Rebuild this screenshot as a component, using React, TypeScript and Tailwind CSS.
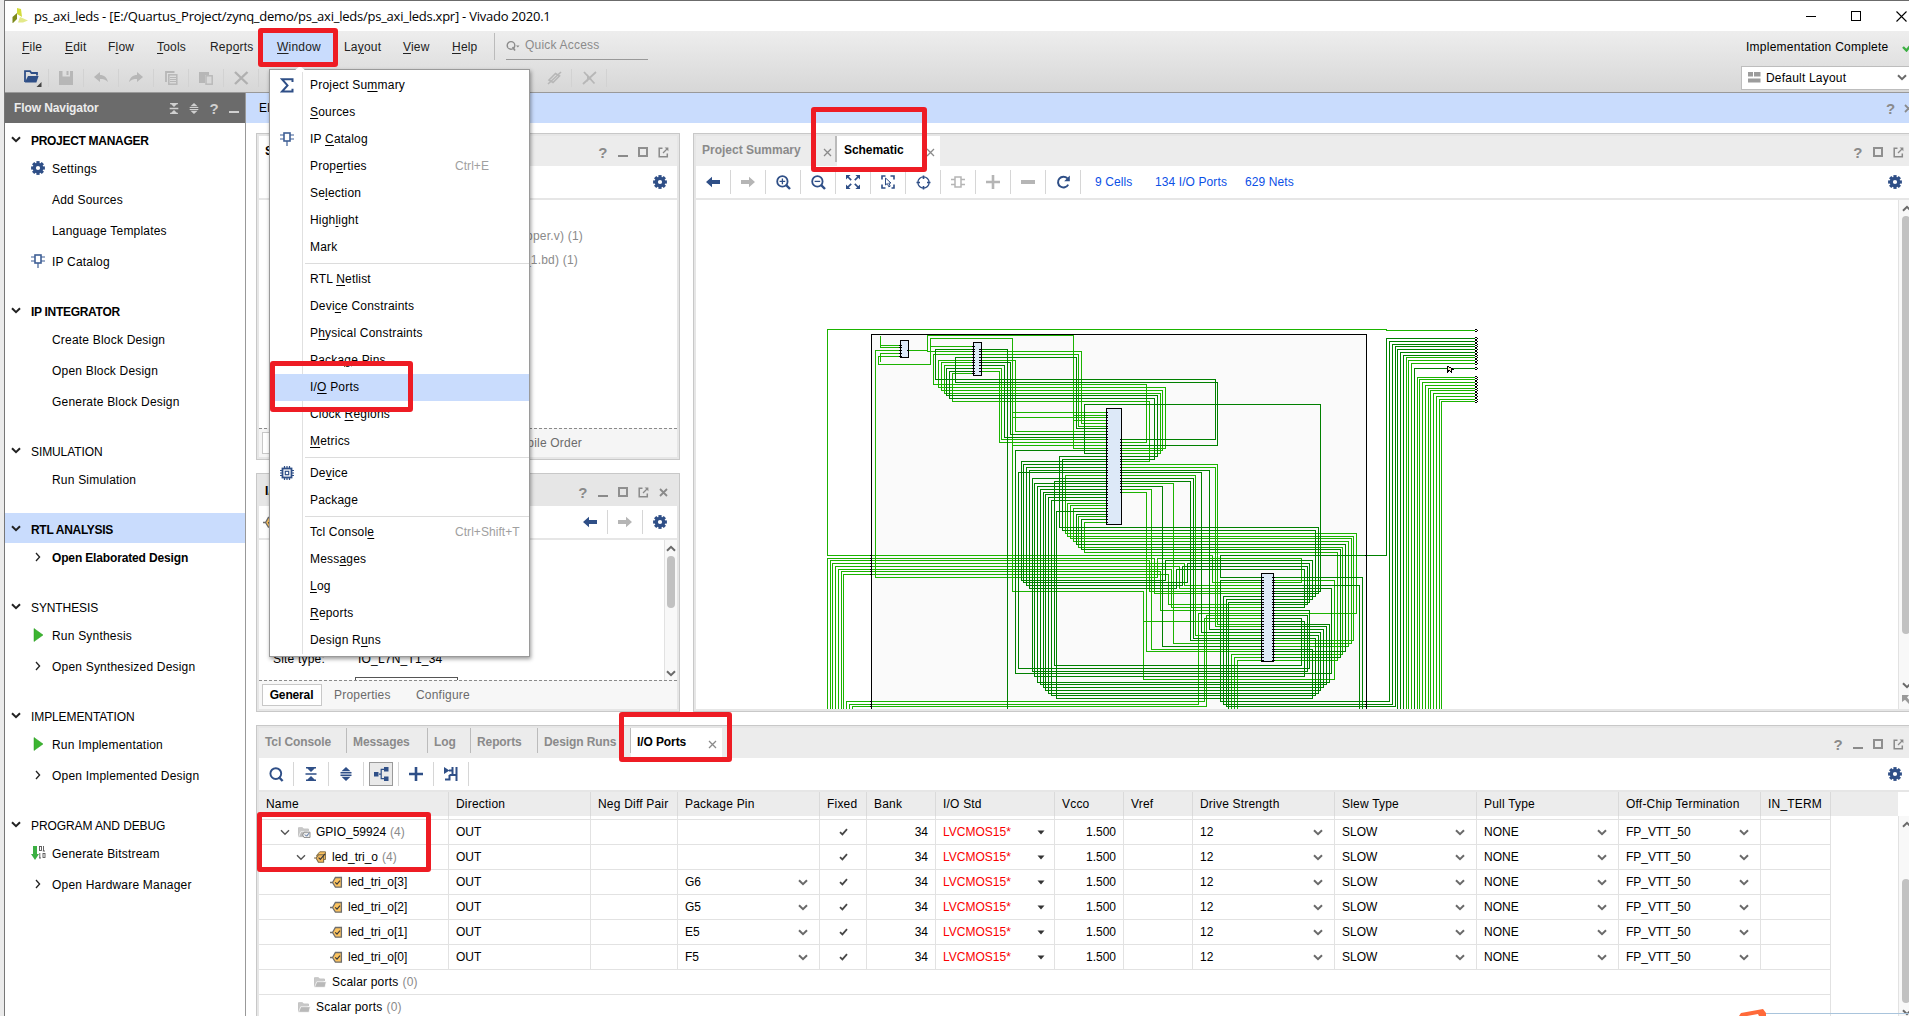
import React from "react";

type IconProps = { className?: string };

const Gear = ({ className = "text-[#2f4f87]" }: IconProps) => (
  <svg width="14" height="14" viewBox="0 0 14 14" className={className}>
    {[0, 45, 90, 135, 180, 225, 270, 315].map((a) => (
      <rect key={a} x="5.4" y="0.1" width="3.2" height="3" fill="currentColor" transform={`rotate(${a} 7 7)`} />
    ))}
    <circle cx="7" cy="7" r="3.7" fill="none" stroke="currentColor" strokeWidth="3.2" />
  </svg>
);

const IpIcon = ({ className = "text-[#3f5f95]" }: IconProps) => (
  <svg width="14" height="14" viewBox="0 0 14 14" className={className} fill="none" stroke="currentColor">
    <rect x="4" y="1" width="6" height="8" strokeWidth="1.6" />
    <path d="M0 3H4M0 7H4M10 3H14M10 7H14M7 9V14" strokeWidth="1.2" />
  </svg>
);

const ChipIcon = () => (
  <svg width="14" height="14" viewBox="0 0 14 14" fill="none" stroke="#2f4f87">
    <rect x="2.5" y="2.5" width="9" height="9" strokeWidth="1.8" />
    <rect x="5.3" y="5.3" width="3.4" height="3.4" strokeWidth="1.2" />
    <path d="M4.5 0V2M7 0V2M9.5 0V2M4.5 12V14M7 12V14M9.5 12V14M0 4.5H2M0 7H2M0 9.5H2M12 4.5H14M12 7H14M12 9.5H14" strokeWidth="1.2" />
  </svg>
);

const SigmaIcon = () => (
  <svg width="14" height="15" viewBox="0 0 14 15" fill="none" stroke="#2f4f87" strokeWidth="2">
    <path d="M12.5 4V1.2H2L7.5 7.4L2 13.5H12.5V10.8" />
  </svg>
);

const Chevron = ({ className = "text-[#6a6a6a]" }: IconProps) => (
  <svg width="10" height="7" viewBox="0 0 10 7" className={className}>
    <path d="M1 1.2L5 5.2L9 1.2" fill="none" stroke="currentColor" strokeWidth="2" />
  </svg>
);
const ThinChevron = ({ className = "text-[#555]" }: IconProps) => (
  <svg width="10" height="7" viewBox="0 0 10 7" className={className}>
    <path d="M1 1.2L5 5.2L9 1.2" fill="none" stroke="currentColor" strokeWidth="1.4" />
  </svg>
);
const ChevronUp = () => (
  <svg width="10" height="7" viewBox="0 0 10 7">
    <path d="M1 5.8L5 1.8L9 5.8" fill="none" stroke="#6a6a6a" strokeWidth="2" />
  </svg>
);
const ChevronRight = () => (
  <svg width="6" height="10" viewBox="0 0 6 10">
    <path d="M1 1L4.6 5L1 9" fill="none" stroke="#222" strokeWidth="1.3" />
  </svg>
);
const Play = () => (
  <svg width="11" height="14" viewBox="0 0 11 14">
    <path d="M1 0.5L10 7L1 13.5Z" fill="#3cb531" stroke="#2a9a20" strokeWidth="0.5" />
  </svg>
);
const Bitstream = () => (
  <svg width="15" height="14" viewBox="0 0 15 14">
    <path d="M2 0H6V8H8L4 14L0 8H2Z" fill="#3cb043" />
    <g fill="none" stroke="#555" strokeWidth="0.9">
      <rect x="8.5" y="0.5" width="2" height="4" />
      <path d="M12.5 0V5M11.8 5H14" />
      <path d="M8.8 7V12M8 12H10" />
      <rect x="12" y="7.5" width="2" height="4" />
    </g>
  </svg>
);

const QMark = ({ className = "text-[#8a8a8a]" }: IconProps) => (
  <span className={`text-[15px] font-bold leading-none ${className}`}>?</span>
);
const MinBar = ({ className = "bg-[#8a8a8a]" }: IconProps) => <span className={`mt-[8px] h-[2px] w-[10px] ${className}`} />;
const Square = () => <span className="h-[10px] w-[10px] border-2 border-[#8f8f8f]" />;
const PopOut = () => (
  <svg width="11" height="11" viewBox="0 0 11 11" fill="none" stroke="#8a8a8a" strokeWidth="1.5">
    <path d="M4.5 1.2H1.2V9.8H9.3V6.5" />
    <path d="M5 6L9.5 1.5" strokeWidth="1.3" />
    <path d="M6.6 0.4H10.4V4.2Z" fill="#8a8a8a" stroke="none" />
  </svg>
);
const Cross = ({ className = "text-[#8a8a8a]", w = 1.3 }: IconProps & { w?: number }) => (
  <svg width="9" height="9" viewBox="0 0 9 9" className={className}>
    <path d="M1 1L8 8M8 1L1 8" stroke="currentColor" strokeWidth={w} />
  </svg>
);

type Ctl = "q" | "min" | "sq" | "pop" | "x";
const Controls = ({ items }: { items: Ctl[] }) => (
  <div className="ml-auto flex h-full items-center pt-[2px]">
    {items.map((c) => (
      <span key={c} className="flex w-[20px] justify-center">
        {c === "q" && <QMark />}
        {c === "min" && <MinBar />}
        {c === "sq" && <Square />}
        {c === "pop" && <PopOut />}
        {c === "x" && <Cross w={1.8} />}
      </span>
    ))}
  </div>
);

const ArrowLeft = ({ className = "text-[#2f4f87]" }: IconProps) => (
  <svg width="14" height="12" viewBox="0 0 14 12" className={className}>
    <path d="M0 6L6 0.8V4H14V8H6V11.2Z" fill="currentColor" />
  </svg>
);
const ArrowRight = () => (
  <svg width="14" height="12" viewBox="0 0 14 12">
    <path d="M14 6L8 0.8V4H0V8H8V11.2Z" fill="#b5b5b5" />
  </svg>
);
const Plus = ({ className = "text-[#2f4f87]" }: IconProps) => (
  <svg width="14" height="14" viewBox="0 0 14 14" className={className}>
    <path d="M7 0V14M0 7H14" stroke="currentColor" strokeWidth="2.6" />
  </svg>
);
const Zoom = ({ plus }: { plus?: boolean }) => (
  <svg width="15" height="15" viewBox="0 0 15 15" fill="none" stroke="#2f4f87">
    <circle cx="6.4" cy="6.4" r="5.2" strokeWidth="1.8" />
    <path d="M10.2 10.2L14 14" strokeWidth="2.4" />
    <path d={plus ? "M6.4 3.6V9.2M3.6 6.4H9.2" : "M3.6 6.4H9.2"} strokeWidth="1.3" />
  </svg>
);
const SearchIcon = () => (
  <svg width="15" height="15" viewBox="0 0 15 15" fill="none" stroke="#2f4f87">
    <circle cx="6.8" cy="6.6" r="5.4" strokeWidth="1.9" />
    <path d="M9.8 10L13.6 14" strokeWidth="2.4" />
  </svg>
);
const FitIcon = () => (
  <svg width="14" height="14" viewBox="0 0 14 14" fill="none" stroke="#2f4f87">
    <path d="M0 0H4.6L0 4.6ZM14 0V4.6L9.4 0ZM14 14H9.4L14 9.4ZM0 14V9.4L4.6 14Z" fill="#2f4f87" stroke="none" />
    <path d="M1 1L5.2 5.2M13 1L8.8 5.2M13 13L8.8 8.8M1 13L5.2 8.8" strokeWidth="1.7" />
  </svg>
);
const SelectIcon = () => (
  <svg width="14" height="14" viewBox="0 0 14 14" fill="none" stroke="#2f4f87">
    <path d="M1 4.5V1H4.5M9.5 1H13V4.5M13 9.5V13H10.5M4.5 13H1V9.5" strokeWidth="1.6" />
    <path d="M4.5 3V10L6.3 8.5L7.8 11.8L9.2 11.2L7.8 8H10Z" strokeWidth="1" />
  </svg>
);
const TargetIcon = () => (
  <svg width="15" height="15" viewBox="0 0 15 15" fill="none" stroke="#2f4f87">
    <circle cx="7.5" cy="7.5" r="5.6" strokeWidth="1.3" />
    <path d="M7.5 0.5V4M7.5 11V14.5M0.5 7.5H4M11 7.5H14.5" strokeWidth="1.6" />
  </svg>
);
const CellIcon = () => (
  <svg width="14" height="14" viewBox="0 0 14 14" fill="none" stroke="#b5b5b5">
    <rect x="4" y="2" width="6" height="10" strokeWidth="1.5" />
    <path d="M0 4.5H4M0 9.5H4M10 4.5H14M10 9.5H14" strokeWidth="1.3" />
  </svg>
);
const Reload = () => (
  <svg width="15" height="14" viewBox="0 0 15 14">
    <path d="M12.2 9.6A5.4 5.4 0 1 1 11.4 3.4" fill="none" stroke="#2f4f87" strokeWidth="2" />
    <path d="M13.8 0.6V6.2H8.2Z" fill="#2f4f87" />
  </svg>
);
const CollapseAll = ({ className = "text-[#2f4f87]" }: IconProps) => (
  <svg width="12" height="14" viewBox="0 0 12 14" className={className} fill="currentColor">
    <path d="M1 0H11V1.6H9.6L6 5L2.4 1.6H1ZM1 14H11V12.4H9.6L6 9L2.4 12.4H1ZM0.5 6.2H11.5V7.8H0.5Z" />
  </svg>
);
const ExpandAll = ({ className = "text-[#2f4f87]" }: IconProps) => (
  <svg width="12" height="14" viewBox="0 0 12 14" className={className} fill="currentColor">
    <path d="M6 0L10.5 4.2H1.5ZM6 14L10.5 9.8H1.5ZM0.5 5H11.5V6.5H0.5ZM0.5 7.5H11.5V9H0.5Z" />
  </svg>
);
const Hier = () => (
  <svg width="15" height="14" viewBox="0 0 15 14">
    <path d="M0 5H4.5V9.5H0ZM10 0H14.5V4.5H10ZM10 9.5H14.5V14H10Z" fill="#2f4f87" />
    <path d="M5 7.2H7.2M10 2.3H7.2V11.7H10" fill="none" stroke="#2f4f87" strokeWidth="1.2" />
  </svg>
);
const MergeIcon = () => (
  <svg width="14" height="14" viewBox="0 0 14 14">
    <path d="M0 0L5.5 3.5L0 7Z" fill="#2f4f87" />
    <path d="M12.5 0V14M8.5 0V8M5 3.5H8.5M5.5 8H12.5M5.5 8V12.5H1" fill="none" stroke="#2f4f87" strokeWidth="2" />
  </svg>
);
const Folder = ({ badge }: { badge?: boolean }) => (
  <svg width="13" height="11" viewBox="0 0 13 11">
    <path d="M0.5 10V0.7H4.5L5.5 2H10.5V4" fill="#c9c9c9" stroke="#c4c4c4" />
    <path d="M0.5 10.3L2.8 4.7H12.3L11 10.3Z" fill="#b9b9b9" stroke="#fff" strokeWidth="0.7" />
    {badge && <path d="M6 5.2H12V10.5H6L4.6 8Z" fill="#eee" stroke="#888" strokeWidth="0.9" />}
    {badge && <path d="M7 7.6L8.6 9.2L11 6.2" fill="none" stroke="#4b6a9c" strokeWidth="1" />}
  </svg>
);
const PortIcon = ({ bus }: { bus?: boolean }) => (
  <svg width="13" height="12" viewBox="0 0 13 12">
    {bus ? (
      <>
        <path d="M2.5 4.5L5.8 0.8H11.5V8.5H5.8Z" fill="#fcc35f" stroke="#8a7650" />
        <path d="M0 7H2L4.4 3.8H9.6V11.3H4.4L2 7" fill="#f3b95c" stroke="#7a6a4a" strokeWidth="1.1" />
        <path d="M4.6 6.6L6.4 8.4L11 2.8" fill="none" stroke="#3b3b3b" strokeWidth="1.2" />
      </>
    ) : (
      <>
        <path d="M0 6.5H2.5L5.4 1.5H11.4V11.2H5.4L2.5 6.5" fill="#fcc35f" stroke="#6d6d6d" strokeWidth="1.3" />
        <path d="M5.2 6.4L7 8.2L10 4.6" fill="none" stroke="#3b3b3b" strokeWidth="1.2" />
      </>
    )}
  </svg>
);
const Tick = () => (
  <svg width="9" height="8" viewBox="0 0 9 8">
    <path d="M1 4.2L3.4 6.4L8 1.2" fill="none" stroke="#484848" strokeWidth="1.8" />
  </svg>
);

/* Text with one underlined mnemonic, marked by a preceding "&". */
const Mn = ({ t }: { t: string }) => {
  const i = t.indexOf("&");
  if (i < 0) return <>{t}</>;
  return (
    <>
      {t.slice(0, i)}
      <span className="underline underline-offset-2">{t[i + 1]}</span>
      {t.slice(i + 2)}
    </>
  );
};

const menus: [string, string][] = [
  ["&File", "w-[43px]"],
  ["&Edit", "w-[43px]"],
  ["F&low", "w-[49px]"],
  ["&Tools", "w-[53px]"],
  ["Rep&orts", "w-[53px]"],
];
const menus2: [string, string][] = [
  ["La&yout", "w-[59px]"],
  ["&View", "w-[49px]"],
  ["&Help", "w-[42px]"],
];

const ToolCell = ({ children }: { children?: React.ReactNode }) => (
  <div className="flex h-[24px] w-[35px] shrink-0 items-center justify-center border-r border-[#d6d6d6]">{children}</div>
);
const MainCell = ({ children }: { children?: React.ReactNode }) => (
  <div className="flex h-[18px] w-[35px] shrink-0 items-center justify-center border-r border-[#d2d2d2]">{children}</div>
);

const TopArea = () => (
  <div className="h-[92px] shrink-0 bg-linear-to-b from-[#ededed] from-35% to-[#d7d7d7]">
    <div className="flex h-[31px] items-center border-t border-[#6b6b6b] bg-white pl-[7px]">
      <svg width="17" height="16" viewBox="0 0 17 16">
        <path d="M5 0L9 1L10 9L5 6Z" fill="#d3dc3c" />
        <path d="M5 5V11L1 15H0.5V9Z" fill="#7d8a1c" />
        <path d="M8 9L16 12.5L11 14.5H6Z" fill="#e3e98a" />
      </svg>
      <span className="ml-[5px] whitespace-nowrap font-['Open_Sans','Noto_Sans',sans-serif] text-[13px] tracking-[-0.24px] text-black">
        ps_axi_leds - [E:/Quartus_Project/zynq_demo/ps_axi_leds/ps_axi_leds.xpr] - Vivado 2020.1
      </span>
      <div className="ml-auto flex items-center gap-[35px] pr-[2px]">
        <span className="h-px w-[10px] bg-black" />
        <span className="h-[10px] w-[10px] border border-black" />
        <svg width="11" height="11" viewBox="0 0 11 11">
          <path d="M0.5 0.5L10.5 10.5M10.5 0.5L0.5 10.5" stroke="#000" strokeWidth="1.1" />
        </svg>
      </div>
    </div>
    <div className="flex h-[31px] items-center text-[#222]">
      <div className="w-[17px]" />
      {menus.map(([t, w]) => (
        <span key={t} className={`${w} whitespace-nowrap`}>
          <Mn t={t} />
        </span>
      ))}
      <div className="flex h-[30px] w-[70px] items-center justify-center bg-[#c9dcfd] pl-[2px]">
        <Mn t="&Window" />
      </div>
      <div className="w-[11px]" />
      {menus2.map(([t, w]) => (
        <span key={t} className={`${w} whitespace-nowrap`}>
          <Mn t={t} />
        </span>
      ))}
      <div className="h-[27px] w-px bg-[#bbb]" />
      <div className="ml-[11px] flex h-[27px] w-[142px] items-center border-b border-[#999] text-[#8b8b8b]">
        <svg width="14" height="12" viewBox="0 0 14 12" fill="none" stroke="#8b8b8b">
          <circle cx="5" cy="5.4" r="3.8" strokeWidth="1.4" />
          <path d="M6.6 7L9 10.5" strokeWidth="1.6" />
          <path d="M10 5.5H13.5L11.8 7.4Z" fill="#8b8b8b" stroke="none" />
        </svg>
        <span className="ml-[5px] pb-[3px]">Quick Access</span>
      </div>
      <span className="ml-auto w-[156px] tracking-[0.25px] text-black">Implementation Complete</span>
      <svg width="7" height="10" viewBox="0 0 7 10">
        <path d="M1 5L4.5 8.5L9 3" fill="none" stroke="#3cb043" strokeWidth="2.4" />
      </svg>
    </div>
    <div className="flex h-[30px] items-center pt-px">
      <div className="w-[9px]" />
      <MainCell>
        <svg width="18" height="17" viewBox="0 0 18 17" className="ml-[4px] mt-[2px]">
          <path d="M1 12V1.2H6L7.5 3H13V5.5" fill="none" stroke="#2f4f87" strokeWidth="1.8" />
          <path d="M0.8 12.6L4 6H14.6L12.4 12.6Z" fill="#2f4f87" />
          <path d="M17.5 12V17H12.5Z" fill="#444" />
        </svg>
      </MainCell>
      <MainCell>
        <svg width="14" height="14" viewBox="0 0 14 14">
          <path d="M0 0H14V14H0ZM3.5 0V5.5H11V0Z" fill="#b7b7b7" fillRule="evenodd" />
          <path d="M7.5 0H9.5V4H7.5Z" fill="#b7b7b7" />
        </svg>
      </MainCell>
      <MainCell>
        <svg width="14" height="11" viewBox="0 0 14 11">
          <path d="M0 5L6 0V3C10 3 13 5.5 14 10C11.5 7.3 9 7 6 7V10Z" fill="#b7b7b7" />
        </svg>
      </MainCell>
      <MainCell>
        <svg width="14" height="11" viewBox="0 0 14 11">
          <path d="M14 5L8 0V3C4 3 1 5.5 0 10C2.5 7.3 5 7 8 7V10Z" fill="#b7b7b7" />
        </svg>
      </MainCell>
      <MainCell>
        <svg width="13" height="14" viewBox="0 0 13 14" fill="none" stroke="#b7b7b7">
          <path d="M1 11V1H9.5" strokeWidth="1.8" />
          <rect x="3.8" y="3.8" width="8" height="9.4" strokeWidth="1.5" />
          <path d="M5 6.5H11M5 8.5H11M5 10.5H11" />
        </svg>
      </MainCell>
      <MainCell>
        <svg width="14" height="14" viewBox="0 0 14 14">
          <path d="M0 1H10V4H6V12H0Z" fill="#b7b7b7" />
          <rect x="7" y="4.8" width="6.2" height="8.4" fill="#d9d9d9" stroke="#b7b7b7" strokeWidth="1.4" />
        </svg>
      </MainCell>
      <MainCell>
        <svg width="15" height="14" viewBox="0 0 15 14">
          <path d="M1 1L13.5 13M13.5 1L1 13" stroke="#b0b0b0" strokeWidth="2.4" />
        </svg>
      </MainCell>
      <div className="w-[278px]" />
      <MainCell>
        <svg width="15" height="14" viewBox="0 0 15 14" fill="none" stroke="#b7b7b7" strokeWidth="1.6">
          <path d="M2 9L8.5 2.5L12.5 5L6 11.5Z" />
          <path d="M1 13L14 1" />
        </svg>
      </MainCell>
      <MainCell>
        <svg width="15" height="14" viewBox="0 0 15 14" fill="none" stroke="#b7b7b7" strokeWidth="1.8">
          <path d="M1 13L14 1M2 1L12.5 12.5" />
          <path d="M5 3V11L7 8.5H10Z" fill="#b7b7b7" stroke="none" />
        </svg>
      </MainCell>
      <div className="ml-auto flex h-[24px] w-[168px] items-center border border-r-0 border-[#bdbdbd] bg-white pl-[6px]">
        <svg width="13" height="11" viewBox="0 0 13 11">
          <path d="M0 0H5V4.5H0ZM6 0H12.5V4.5H6ZM0 6.5H12.5V10.5H0Z" fill="#9c9c9c" />
        </svg>
        <span className="ml-[5px] text-black">Default Layout</span>
        <span className="ml-auto pr-[2px]">
          <Chevron />
        </span>
      </div>
    </div>
  </div>
);

type NavItem = { t: string; icon?: React.ReactNode; bold?: boolean };
const nav: { t: string; bold?: boolean; active?: boolean; items: NavItem[] }[] = [
  {
    t: "PROJECT MANAGER",
    bold: true,
    items: [
      { t: "Settings", icon: <Gear /> },
      { t: "Add Sources" },
      { t: "Language Templates" },
      { t: "IP Catalog", icon: <IpIcon /> },
    ],
  },
  { t: "IP INTEGRATOR", bold: true, items: [{ t: "Create Block Design" }, { t: "Open Block Design" }, { t: "Generate Block Design" }] },
  { t: "SIMULATION", items: [{ t: "Run Simulation" }] },
  { t: "RTL ANALYSIS", bold: true, active: true, items: [{ t: "Open Elaborated Design", icon: <ChevronRight />, bold: true }] },
  { t: "SYNTHESIS", items: [{ t: "Run Synthesis", icon: <Play /> }, { t: "Open Synthesized Design", icon: <ChevronRight /> }] },
  { t: "IMPLEMENTATION", items: [{ t: "Run Implementation", icon: <Play /> }, { t: "Open Implemented Design", icon: <ChevronRight /> }] },
  { t: "PROGRAM AND DEBUG", items: [{ t: "Generate Bitstream", icon: <Bitstream /> }, { t: "Open Hardware Manager", icon: <ChevronRight /> }] },
];

const FlowNavigator = () => (
  <aside className="flex w-[241px] shrink-0 flex-col border-r border-[#999] bg-white">
    <div className="flex h-[30px] items-center bg-[#6b6b6b] pl-[9px] pr-[1px] font-bold tracking-[-0.1px] text-[#ececec]">
      Flow Navigator
      <div className="ml-auto flex items-center">
        <span className="flex w-[20px] justify-center">
          <CollapseAll className="h-[11px] text-[#d0d0d0]" />
        </span>
        <span className="flex w-[20px] justify-center">
          <ExpandAll className="h-[11px] text-[#d0d0d0]" />
        </span>
        <span className="flex w-[20px] justify-center">
          <QMark className="text-[#d0d0d0]" />
        </span>
        <span className="flex w-[20px] justify-center">
          <MinBar className="bg-[#d0d0d0]" />
        </span>
      </div>
    </div>
    <nav className="flex flex-col gap-[17px] pt-px">
      {nav.map((s) => (
        <section key={s.t}>
          <div className={`flex h-[30px] items-center pl-[6px] pt-[3px] ${s.active ? "bg-[#c9dcfd]" : ""} ${s.bold ? "font-bold tracking-[-0.3px]" : "tracking-[-0.1px]"}`}>
            <span className="mb-[3px] flex w-[10px]">
              <Chevron className="text-[#222]" />
            </span>
            <span className="ml-[10px]">{s.t}</span>
          </div>
          {s.items.map((i) => (
            <div key={i.t} className={`flex h-[31px] items-center ${i.bold ? "font-bold tracking-[-0.15px]" : ""}`}>
              <span className="ml-[23px] flex w-[20px] justify-center pb-[3px]">{i.icon}</span>
              <span className="ml-[4px] whitespace-nowrap pb-[2px]">{i.t}</span>
            </div>
          ))}
        </section>
      ))}
    </nav>
  </aside>
);

const Scroll = ({ thumb, className = "" }: { thumb: React.ReactNode; className?: string }) => (
  <div className={`flex shrink-0 flex-col items-center overflow-hidden border-l border-[#e2e2e2] bg-[#f8f8f8] ${className}`}>
    <div className="flex h-[16px] shrink-0 items-center">
      <ChevronUp />
    </div>
    <div className="flex w-full flex-1 flex-col items-center">{thumb}</div>
    <div className="flex h-[14px] shrink-0 items-center">
      <Chevron />
    </div>
  </div>
);

const panel = "flex flex-col border border-[#c8c8c8] bg-white";
const inner = "flex min-h-0 flex-1 flex-col border-2 border-[#e6e6e6]";

const SourcesPanel = () => (
  <div className={`${panel} h-[327px]`}>
    <div className={inner}>
      <div className="flex h-[30px] shrink-0 items-center bg-[#ececec] pr-[4px]">
        <div className="flex h-full w-[80px] items-center bg-white pl-[6px] font-bold">S</div>
        <Controls items={["q", "min", "sq", "pop"]} />
      </div>
      <div className="flex h-[34px] shrink-0 items-center justify-end border-b-2 border-[#e6e6e6] pr-[10px]">
        <Gear />
      </div>
      <div className="flex-1 pt-[24px] text-[#8a8a8a]">
        <div className="flex h-[24px] w-[324px] items-center justify-end">pper.v) (1)</div>
        <div className="flex h-[24px] w-[319px] items-center justify-end">_1.bd) (1)</div>
      </div>
      <div className="flex h-[29px] shrink-0 items-center border-t border-dashed border-[#8a8a8a] bg-[#f5f5f5] text-[#6b6b6b]">
        <span className="ml-[3px] h-[22px] w-[60px] border border-[#c8c8c8] bg-white" />
        <span className="ml-auto mr-[95px]">pile Order</span>
      </div>
    </div>
  </div>
);

const PropsPanel = () => (
  <div className={`${panel} mt-[13px] h-[239px]`}>
    <div className={inner}>
      <div className="flex h-[30px] shrink-0 items-center bg-[#e6e6e6] pl-[6px] pr-[4px] font-bold">
        I/
        <Controls items={["q", "min", "sq", "pop", "x"]} />
      </div>
      <div className="flex h-[34px] shrink-0 items-center border-b-2 border-[#e6e6e6]">
        <span className="ml-[4px]">
          <PortIcon />
        </span>
        <div className="ml-auto flex h-[24px] w-[35px] items-center justify-center border-r border-[#d6d6d6]">
          <ArrowLeft />
        </div>
        <div className="flex h-[24px] w-[35px] items-center justify-center border-r border-[#d6d6d6]">
          <ArrowRight />
        </div>
        <span className="ml-[10px] mr-[10px]">
          <Gear />
        </span>
      </div>
      <div className="flex h-[140px] shrink-0">
        <div className="flex flex-1 flex-col justify-end">
          <div className="flex h-[20px] items-center pl-[14px]">
            <span className="w-[85px]">Site type:</span>
            <span>IO_L7N_T1_34</span>
          </div>
          <div className="ml-[96px] mt-[8px] h-[3px] w-[103px] border border-b-0 border-[#555]" />
        </div>
        <Scroll className="w-[13px]" thumb={<div className="h-[52px] w-[8px] rounded-full bg-[#c1c1c1]" />} />
      </div>
      <div className="flex min-h-0 flex-1 items-center border-t border-dashed border-[#8a8a8a] bg-[#f7f7f7] text-[#6b6b6b]">
        <span className="ml-[3px] flex h-[22px] w-[60px] items-center justify-center border border-[#c8c8c8] bg-white pr-px font-bold tracking-[-0.15px] text-black">
          General
        </span>
        <span className="ml-[12px] w-[82px]">Properties</span>
        <span>Configure</span>
      </div>
    </div>
  </div>
);

/* Net routing in drawing units; three units make one pixel. */
const leftLight = [
  "M1020 28H22V706H1020", "M181 48V82H240", "M181 76H240", "M240 91H166V772H1012V715H1020", "M240 100H181V125",
  "M240 109H175V133H331V55H577V814H970V1078H1020", "M970 904H1020", "M331 79H460", "M266 91H322", "M460 94H322V46H760V385H860",
  "M460 103H340V193H979V367H905", "M460 121H355V202H1020", "M460 127H364V211H1020", "M460 136H373V220H1020",
  "M460 160H397V244H988V424H905", "M485 94H784V310H860", "M485 103H775V319H860", "M485 121H586V334H860",
  "M485 145H544V358H860", "M485 154H538V367H860", "M577 277H860", "M760 286H860", "M577 292H860", "M760 301H860", "M577 376H860",
  "M860 466H736V640H1020", "M860 550H742V649H1020", "M860 556H751V655H1020", "M860 565H760V664H1020", "M860 589H775V682H1020",
  "M860 607H793V697H1020", "M905 385H1020", "M905 391H1020", "M905 400H1020", "M905 433H1020", "M905 442H1020", "M905 466H1020",
  "M905 490H1020", "M905 508H994V988H1020", "M905 517H979V994H1020", "M22 1168V715H1003V820H1020", "M31 1168V721H988V814H1020",
  "M37 1168V730H1020", "M46 1168V739H1020", "M55 1168V748H1020", "M64 1168V754H1020", "M70 1168V763H1020",
  "M79 1168V1144H1020", "M88 1168V1153H1020", "M97 1168V1159H1020",
];
const leftDark = [
  "M460 88H346V178H1020", "M460 112H406V187H1020", "M460 145H379V226H1012V409H905", "M460 154H388V235H1003V418H905",
  "M485 88H562V1168", "M485 112H769V325H860", "M485 127H571V343H860", "M485 136H553V352H860", "M1020 253H793V400H860",
  "M860 391H586V1060H1020", "M860 409H718V622H1020", "M860 418H727V631H1020", "M860 424H604V781H1020", "M860 433H610V787H1020",
  "M860 442H619V796H1020", "M860 451H628V805H1020", "M860 457H595V1045H1020", "M860 475H637V1054H1020", "M860 484H703V1036H1020",
  "M860 490H643V1069H1020", "M860 499H652V1087H1020", "M860 508H661V1093H1020", "M860 517H670V1102H1020", "M860 523H676V1111H1020",
  "M860 532H685V1120H1020", "M860 541H694V1126H1020", "M860 574H709V1135H1020", "M860 583H769V673H1020", "M860 598H784V688H1020",
  "M905 358H1020", "M905 376H1020", "M905 451H1020", "M905 457H1020", "M905 475H1020", "M905 484H1020", "M905 499H1020",
];
const rightLight = [
  "M0 28H709V31H975", "M0 202H46V385H0", "M0 211H37V391H0", "M0 220H31V400H0", "M0 433H202V913H334", "M0 442H196V919H334",
  "M0 466H136V946H334", "M0 490H70V970H334", "M0 508H4V988H334", "M0 994H334", "M0 640H619V880H375", "M0 649H610V961H375",
  "M0 655H604V970H375", "M0 664H595V979H375", "M0 682H577V1003H375", "M0 697H562V1021H375", "M0 706H187V787H334",
  "M0 715H13V820H334", "M0 772H22V715H454V787H375", "M0 730H103V796H334", "M0 739H88V805H334", "M0 748H64V862H334",
  "M0 754H31V871H334", "M0 763H55V853H334", "M0 814H334", "M334 880H145V1153H0", "M334 886H169V1159H0", "M334 895H163V1144H0",
  "M0 904H334", "M334 1003H244V1168", "M334 1012H253V1168", "M334 1021H262V1168", "M375 781H553V1078H0",
  "M769 1168V112H975", "M775 1168V121H975", "M784 1168V130H975", "M802 1168V172H975", "M808 1168V178H975", "M817 1168V187H975",
  "M826 1168V196H975", "M835 1168V205H975", "M841 1168V211H975", "M850 1168V220H975", "M859 1168V229H975", "M868 1168V238H975",
  "M874 1168V244H975",
];
const rightDark = [
  "M0 178H196V358H0", "M0 187H202V376H0", "M0 226H22V409H0", "M0 235H13V418H0", "M0 253H511V814H375", "M0 451H178V928H334",
  "M0 457H154V937H334", "M0 475H130V955H334", "M0 484H121V961H334", "M0 499H37V979H334", "M0 622H505V820H375", "M0 631H496V829H375",
  "M0 673H586V994H375", "M0 688H571V1012H375", "M0 781H46V721H487V838H375", "M0 787H112V730H478V847H375", "M0 796H97V739H472V853H375",
  "M0 805H79V748H463V862H375", "M334 772H211V706H709V55H975", "M334 781H211V1144H718V64H975", "M334 829H220V1153H727V73H975",
  "M334 838H229V1159H736V79H975", "M334 847H235V1168", "M375 772H637V1168", "M375 796H628V1168", "M375 805H544V1060H0",
  "M375 871H478V1045H0", "M375 886H472V1054H0", "M375 895H454V1036H0", "M375 904H463V1069H0", "M375 913H538V1087H0",
  "M375 919H529V1093H0", "M375 928H520V1102H0", "M375 937H511V1111H0", "M375 946H505V1120H0", "M375 955H496V1126H0",
  "M375 988H487V1135H0", "M742 1168V88H975", "M751 1168V97H975", "M760 1168V106H975", "M793 1168V145H975",
];
const pinRows = {
  u1: [76, 82, 91, 100, 109],
  u2l: [79, 88, 94, 103, 112, 121, 127, 136, 145, 154, 160],
  u2r: [88, 94, 103, 112, 121, 127, 136, 145, 154],
  u3l: [277, 286, 292, 301, 310, 319, 325, 334, 343, 352, 358, 367, 376, 385, 391, 400, 409, 418, 424, 433, 442, 451, 457, 466, 475, 484, 490, 499, 508, 517, 523, 532, 541, 550, 556, 565, 574, 583, 589, 598, 607],
  u3r: [358, 367, 376, 385, 391, 400, 409, 418, 424, 433, 442, 451, 457, 466, 475, 484, 490, 499, 508, 517],
  u4l: [772, 781, 787, 796, 805, 814, 820, 829, 838, 847, 853, 862, 871, 880, 886, 895, 904, 913, 919, 928, 937, 946, 955, 961, 970, 979, 988, 994, 1003, 1012, 1021],
  frame: [706, 715, 721, 730, 739, 748, 754, 763, 1144, 1153, 1159],
  out: [31, 55, 64, 73, 79, 88, 97, 106, 112, 121, 130, 145, 172, 178, 187, 196, 205, 211, 220, 229, 238, 244],
};
const ticks = (x1: number, x2: number, ys: number[]) => ys.map((y) => `M${x1} ${y}H${x2}`).join("");

const Schematic = () => (
  <svg width="1202" height="509" viewBox="-372 -360 3606 1527" shapeRendering="crispEdges" fill="none" strokeWidth="3" className="shrink-0">
    <path d="M154 1170V43H1639V1170" fill="#fafafa" />
    <path d={leftLight.join("")} stroke="#1bb300" />
    <path d={leftDark.join("")} stroke="#008000" />
    <g transform="translate(990 0)">
      <path d={rightLight.join("")} stroke="#1bb300" />
      <path d={rightDark.join("")} stroke="#008000" />
    </g>
    <path d="M154 1170V43H1639V1170" stroke="#000" />
    <g fill="#dde9f8" stroke="#000">
      <path d="M241.5 61.5H265.5V112.5H241.5Z" />
      <path d="M460.5 67.5H484.5V166.5H460.5Z" />
      <path d="M859.5 265.5H904.5V613.5H859.5Z" />
      <path d="M1324.5 760.5H1360.5V1024.5H1324.5Z" />
    </g>
    <g stroke="#000">
      <path d={ticks(237, 246, pinRows.u1) + "M261 91H267"} />
      <path d={ticks(456, 465, pinRows.u2l) + ticks(477, 486, pinRows.u2r)} />
      <path d={ticks(858, 864, pinRows.u3l) + ticks(900, 906, pinRows.u3r)} />
      <path d={ticks(1323, 1332, pinRows.u4l) + ticks(1356, 1365, pinRows.u4l)} />
      <path d={ticks(150, 156, pinRows.frame) + "M1635 706H1641M1635 1144H1641M1635 1153H1641M1635 1159H1641"} />
      <path d={pinRows.out.map((y) => `M1965 ${y - 3}H1971M1965 ${y + 3}H1971M1971 ${y}H1974`).join("")} />
    </g>
    <path d="M1882 138V156L1887 151L1893 156V150L1899 148Z" fill="#f5e9c0" stroke="#000" />
  </svg>
);

const SchematicPanel = () => (
  <div className={`${panel} min-w-0 flex-1 border-r-0`}>
    <div className={`${inner} border-r-0`}>
      <div className="flex h-[30px] shrink-0 items-center bg-[#ececec] pr-[1px]">
        <span className="ml-[6px] w-[121px] pb-[2px] font-bold tracking-[0px] text-[#8a8a8a]">Project Summary</span>
        <span className="pt-[3px]">
          <Cross />
        </span>
        <span className="ml-[3px] h-[26px] w-[2px] self-start bg-[#bbb]" />
        <div className="flex h-full w-[103px] items-center bg-white pl-[7px] font-bold tracking-[-0.05px]">
          <span className="pb-[2px]">Schematic</span>
          <span className="ml-auto mr-[5px] pt-[3px]">
            <Cross />
          </span>
        </div>
        <Controls items={["q", "sq", "pop"]} />
      </div>
      <div className="flex h-[34px] shrink-0 items-center border-b-2 border-[#e6e6e6]">
        <ToolCell><ArrowLeft /></ToolCell>
        <ToolCell><ArrowRight /></ToolCell>
        <ToolCell><Zoom plus /></ToolCell>
        <ToolCell><Zoom /></ToolCell>
        <ToolCell><FitIcon /></ToolCell>
        <ToolCell><SelectIcon /></ToolCell>
        <ToolCell><TargetIcon /></ToolCell>
        <ToolCell><CellIcon /></ToolCell>
        <ToolCell><Plus className="text-[#b5b5b5]" /></ToolCell>
        <ToolCell><span className="h-[4px] w-[14px] bg-[#b5b5b5]" /></ToolCell>
        <ToolCell><Reload /></ToolCell>
        <div className="ml-[14px] flex whitespace-nowrap tracking-[0.1px] text-[#0b50e6]">
          <span className="w-[60px]">9 Cells</span>
          <span className="w-[90px]">134 I/O Ports</span>
          <span>629 Nets</span>
        </div>
        <span className="ml-auto mr-[7px]">
          <Gear />
        </span>
      </div>
      <div className="flex min-h-0 flex-1 overflow-hidden">
        <Schematic />
        <div className="flex w-[20px] shrink-0 flex-col border-l border-[#e2e2e2] bg-[#f8f8f8] pl-[3px]">
          <div className="flex h-[16px] items-center">
            <ChevronUp />
          </div>
          <div className="h-[418px] w-[8px] rounded-full bg-[#c1c1c1]" />
          <div className="mt-auto flex h-[14px] items-center">
            <Chevron />
          </div>
          <svg width="10" height="12" viewBox="0 0 10 12" className="mb-[2px] mt-[3px] shrink-0">
            <path d="M0 0H7L5 2.5L10 8L8 10L3 4.8L0 7Z" fill="#9a9a9a" />
          </svg>
        </div>
      </div>
    </div>
  </div>
);

const cols: [string, string][] = [
  ["Name", "w-[190px]"],
  ["Direction", "w-[142px]"],
  ["Neg Diff Pair", "w-[87px]"],
  ["Package Pin", "w-[142px]"],
  ["Fixed", "w-[47px]"],
  ["Bank", "w-[69px]"],
  ["I/O Std", "w-[119px]"],
  ["Vcco", "w-[69px]"],
  ["Vref", "w-[69px]"],
  ["Drive Strength", "w-[142px]"],
  ["Slew Type", "w-[142px]"],
  ["Pull Type", "w-[142px]"],
  ["Off-Chip Termination", "w-[142px]"],
  ["IN_TERM", "w-[70px]"],
];

const Drop = ({ v }: { v: string }) => (
  <div className="flex w-full items-center justify-between pr-[11px]">
    <span>{v}</span>
    <Chevron />
  </div>
);

const NameCell = ({ depth, t, n, kind, open }: { depth: string; t: string; n?: string; kind: string; open?: boolean }) => (
  <div className={`flex items-center ${depth}`}>
    <span className="flex w-[18px] shrink-0">{open && <ThinChevron />}</span>
    <span className="flex w-[18px] shrink-0 items-center">
      {kind === "folder" && <Folder />}
      {kind === "iface" && <Folder badge />}
      {kind === "bus" && <PortIcon bus />}
      {kind === "port" && <PortIcon />}
    </span>
    <span className="whitespace-nowrap">{t}</span>
    {n && <span className="ml-[4px] text-[#8a8a8a]">{n}</span>}
  </div>
);

const rows: { t: string; n?: string; kind: string; depth: string; open?: boolean; pin?: string }[] = [
  { t: "GPIO_59924", n: "(4)", kind: "iface", depth: "pl-[21px]", open: true },
  { t: "led_tri_o", n: "(4)", kind: "bus", depth: "pl-[37px]", open: true },
  { t: "led_tri_o[3]", kind: "port", depth: "pl-[53px]", pin: "G6" },
  { t: "led_tri_o[2]", kind: "port", depth: "pl-[53px]", pin: "G5" },
  { t: "led_tri_o[1]", kind: "port", depth: "pl-[53px]", pin: "E5" },
  { t: "led_tri_o[0]", kind: "port", depth: "pl-[53px]", pin: "F5" },
];

const PortsPanel = () => (
  <div className={`${panel} mt-[13px] h-[300px] border-r-0`}>
    <div className={`${inner} border-r-0`}>
      <div className="flex h-[30px] shrink-0 items-center bg-[#ececec] pr-[1px] font-bold tracking-[-0.1px] text-[#8a8a8a]">
        {[
          ["Tcl Console", "w-[88px]"],
          ["Messages", "w-[81px]"],
          ["Log", "w-[43px]"],
          ["Reports", "w-[67px]"],
          ["Design Runs", "w-[93px]"],
        ].map(([t, w]) => (
          <div key={t} className={`${w} flex h-[25px] items-center self-start whitespace-nowrap border-r border-[#bbb] pl-[6px] pt-[3px]`}>
            {t}
          </div>
        ))}
        <div className="flex h-full w-[91px] items-center bg-white pl-[6px] text-black">
          <span className="pb-[2px]">I/O Ports</span>
          <span className="ml-auto mr-[5px] pt-[3px]">
            <Cross />
          </span>
        </div>
        <Controls items={["q", "min", "sq", "pop"]} />
      </div>
      <div className="flex h-[34px] shrink-0 items-center border-b-2 border-[#e6e6e6]">
        <ToolCell><SearchIcon /></ToolCell>
        <ToolCell><CollapseAll /></ToolCell>
        <ToolCell><ExpandAll /></ToolCell>
        <ToolCell>
          <span className="flex h-[24px] w-[24px] items-center justify-center border border-[#9a9a9a] bg-[#e9e9e9]">
            <Hier />
          </span>
        </ToolCell>
        <ToolCell><Plus /></ToolCell>
        <ToolCell><MergeIcon /></ToolCell>
        <span className="ml-auto mr-[7px]">
          <Gear />
        </span>
      </div>
      <div className="flex min-h-0 flex-1">
        <div className="flex w-[1639px] shrink-0 flex-col">
          <div className="flex h-[24px] shrink-0 bg-[#ececec]">
            {cols.map(([t, w]) => (
              <div key={t} className={`${w} flex shrink-0 items-center whitespace-nowrap border-r border-[#dadada] pl-[7px]`}>
                {t}
              </div>
            ))}
          </div>
          <div className="min-h-0 w-[1572px] flex-1 overflow-hidden border-r border-[#e2e2e2]">
            <div className="flex h-[3px]">
              {cols.map(([t, w]) => (
                <div key={t} className={`${w} shrink-0 border-r border-[#e2e2e2]`} />
              ))}
            </div>
            {rows.map((r) => {
              const cell = [
                <NameCell key="n" {...r} />,
                "OUT",
                "",
                r.pin ? <Drop v={r.pin} /> : "",
                <span key="f" className="pl-[12px]"><Tick /></span>,
                <span key="b" className="w-full pr-[7px] text-right">34</span>,
                <div key="s" className="flex w-full items-center justify-between pr-[9px] text-[#fb0000]">
                  <span>LVCMOS15*</span>
                  <svg width="8" height="5" viewBox="0 0 8 5"><path d="M0.5 0.5H7.5L4 4.5Z" fill="#333" /></svg>
                </div>,
                <span key="v" className="w-full pr-[7px] text-right">1.500</span>,
                "",
                <Drop key="d" v="12" />,
                <Drop key="sl" v="SLOW" />,
                <Drop key="pu" v="NONE" />,
                <Drop key="oc" v="FP_VTT_50" />,
                "",
              ];
              return (
                <div key={r.t} className="flex h-[25px] border-t border-[#e2e2e2] tracking-normal">
                  {cols.map(([t, w], i) => (
                    <div key={t} className={`${w} flex shrink-0 items-center border-r border-[#e2e2e2] ${i === 0 ? "" : "pl-[7px]"}`}>
                      {cell[i]}
                    </div>
                  ))}
                </div>
              );
            })}
            <div className="flex h-[25px] items-center border-t border-[#e2e2e2]">
              <NameCell depth="pl-[37px]" t="Scalar ports" n="(0)" kind="folder" />
            </div>
            <div className="flex h-[25px] items-center border-t border-[#e2e2e2]">
              <NameCell depth="pl-[21px]" t="Scalar ports" n="(0)" kind="folder" />
            </div>
          </div>
        </div>
        <div className="mt-[24px] flex w-[20px] flex-col border-l border-[#e2e2e2] bg-[#f8f8f8] pl-[3px]">
          <div className="flex h-[16px] items-center">
            <ChevronUp />
          </div>
          <div className="mt-[47px] h-[124px] w-[8px] shrink-0 rounded-full bg-[#c1c1c1]" />
          <div className="mt-[6px]">
            <Chevron />
          </div>
        </div>
      </div>
    </div>
  </div>
);

type MenuRow = { t: string; k?: string; icon?: React.ReactNode; on?: boolean };
const groups: MenuRow[][] = [
  [
    { t: "Project Su&mmary", icon: <SigmaIcon /> },
    { t: "&Sources" },
    { t: "IP &Catalog", icon: <IpIcon /> },
    { t: "Prop&erties", k: "Ctrl+E" },
    { t: "Se&lection" },
    { t: "High&light" },
    { t: "Mark" },
  ],
  [
    { t: "RTL &Netlist" },
    { t: "Devi&ce Constraints" },
    { t: "P&hysical Constraints" },
    { t: "Packa&ge Pins" },
    { t: "I/&O Ports", on: true },
    { t: "Clock &Regions" },
    { t: "&Metrics" },
  ],
  [{ t: "De&vice", icon: <ChipIcon /> }, { t: "Packa&ge" }],
  [{ t: "Tcl Consol&e", k: "Ctrl+Shift+T" }, { t: "Mess&ages" }, { t: "&Log" }, { t: "&Reports" }, { t: "Design R&uns" }],
];

const WindowMenu = () => (
  <div className="absolute left-[269px] top-[69px] h-[588px] w-[261px] border border-[#9a9a9a] bg-white pt-[2px] shadow-[1px_2px_4px_rgba(0,0,0,0.4)]">
    <svg width="12" height="5" viewBox="0 0 12 5" className="absolute -top-[4px] left-[24px]">
      <path d="M0 5L6 0L12 5Z" fill="#fff" />
    </svg>
    <div className="absolute bottom-[2px] left-[32px] top-[2px] w-px bg-[#e0e0e0]" />
    {groups.map((g, gi) => (
      <div key={gi} className="relative">
        {gi > 0 && (
          <div className="flex h-[5px] items-center pl-[35px]">
            <div className="h-px w-full bg-[#dcdcdc]" />
          </div>
        )}
        {g.map((r) => (
          <div key={r.t} className={`flex h-[27px] items-center whitespace-nowrap pb-px ${r.on ? "bg-[#c9dcfd]" : ""}`}>
            <span className="flex w-[34px] justify-center">{r.icon}</span>
            <span className="w-[145px] pb-px pl-[6px]">
              <Mn t={r.t} />
            </span>
            <span className="pb-px pl-[6px] tracking-[0.05px] text-[#a0a0a0]">{r.k}</span>
          </div>
        ))}
      </div>
    ))}
  </div>
);

const mark = "absolute rounded-[3px] border-[5px] border-[#ee1c24]";

export default function App() {
  return (
    <div className="relative flex h-[1016px] w-[1909px] overflow-hidden bg-white font-['Liberation_Sans',Arial,sans-serif] text-[12px] leading-[16px] tracking-[0.2px] text-black">
      <div className="w-[5px] shrink-0 border-r border-[#777] bg-[#ebebeb]" />
      <div className="flex min-w-0 flex-1 flex-col">
        <TopArea />
        <div className="flex min-h-0 flex-1 border-t border-[#999]">
          <FlowNavigator />
          <main className="flex min-w-0 flex-1 flex-col">
            <div className="flex h-[30px] shrink-0 items-center overflow-hidden bg-[#c9dcfd] pl-[13px]">
              <span>El</span>
              <div className="ml-auto flex w-[23px] shrink-0 items-center gap-[9px]">
                <QMark />
                <span className="shrink-0">
                  <Cross w={1.8} />
                </span>
              </div>
            </div>
            <div className="flex min-h-0 flex-1 flex-col pl-[10px] pt-[10px]">
              <div className="flex h-[579px] shrink-0 gap-[13px]">
                <div className="flex w-[424px] shrink-0 flex-col">
                  <SourcesPanel />
                  <PropsPanel />
                </div>
                <SchematicPanel />
              </div>
              <PortsPanel />
            </div>
          </main>
        </div>
      </div>

      <WindowMenu />

      <div className={`${mark} left-[258px] top-[28px] h-[39px] w-[80px]`} />
      <div className={`${mark} left-[270px] top-[361px] h-[51px] w-[143px]`} />
      <div className={`${mark} left-[811px] top-[107px] h-[65px] w-[116px]`} />
      <div className={`${mark} left-[619px] top-[712px] h-[50px] w-[113px]`} />
      <div className={`${mark} left-[257px] top-[812px] h-[60px] w-[174px]`} />

      <svg width="170" height="7" viewBox="0 0 170 7" className="absolute bottom-0 right-0">
        <path d="M0 7L2 4L24 0L27 4V7H20L19 5L8 7Z" fill="#ff6a3a" />
        <path d="M27 4.5H170" stroke="#a9c4dc" strokeWidth="1" />
      </svg>
    </div>
  );
}
